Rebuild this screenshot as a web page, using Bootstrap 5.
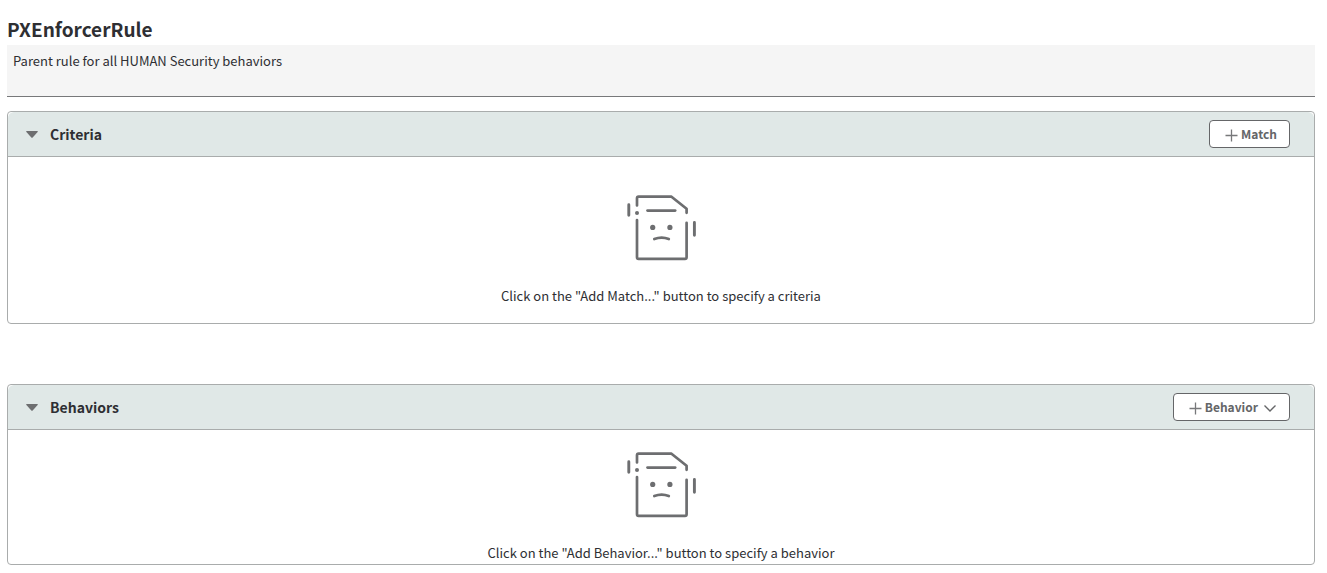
<!DOCTYPE html>
<html lang="en">
<head>
<meta charset="utf-8">
<meta name="viewport" content="width=device-width, initial-scale=1">
<title>PXEnforcerRule</title>
<link href="https://cdn.jsdelivr.net/npm/bootstrap@5.3.0/dist/css/bootstrap.min.css" rel="stylesheet">
<style>
  body { font-family: "Source Sans Pro", "Noto Sans CJK SC", sans-serif; font-size: 13px; line-height: 20px; color: #2e2f33; background: #fff; }
  .rule-page { padding: 14px 12px 8px 7px; }
  .rule-title { font-size: 19px; line-height: 29px; margin-bottom: 2px; font-weight: 700; }
  .rule-note { height: 52px; padding: 6px; resize: none; font-size: 13px; line-height: 20px; color: #2e2f33; background: #f5f5f5; border: 0; border-bottom: 1px solid #77787a; }
  .panels { gap: 60px; margin-top: 14px; }
  .panel { border: 1px solid #a9acac; --bs-card-border-radius: 4px; --bs-card-inner-border-radius: 3px; }
  .panel-head { min-height: 45px; padding: 0 24px 0 18px; background: #e0e8e7; border-bottom: 1px solid #a9acac; }
  .panel-toggle { gap: 12px; font-size: 14px; line-height: 22px; font-weight: 700; color: #2e2f33; }
  .btn-add { gap: 3px; height: 28px; padding: 0 12px 0 15px; font-size: 12px; line-height: 20px; font-weight: 700; color: #656668; background: #fff; border: 1px solid #656668; border-radius: 4px; }
  .empty-state { padding: 22px 16px 1px; }
  .empty-state.roomy { padding: 38px 16px 17px; }
  .empty-art { margin-bottom: 25px; }
</style>
</head>
<body>
<svg class="d-none" aria-hidden="true">
  <symbol id="sad-page" viewBox="0 0 70 66">
    <g fill="none" stroke="#6d6e70" stroke-width="2.7" stroke-linecap="round" stroke-linejoin="round">
      <path d="M10 10.500V3.300Q10 1.700 11.600 1.700H44.500L59.600 13.800V17.800M10 25V62.300Q10 63.900 11.600 63.900H58Q59.600 63.900 59.600 62.300V27.800"/>
      <path stroke-width="2.9" d="M1.800 9.800V20.300M67.400 27.500V40.200"/>
      <path d="M20.500 15.600H48.200"/>
      <path d="M27.300 44.100Q34.700 41.200 41.800 44.100"/>
    </g>
    <g fill="#6d6e70"><circle cx="10" cy="18" r="2"/><circle cx="25.700" cy="32.400" r="2.600"/><circle cx="42.900" cy="32.400" r="2.600"/></g>
  </symbol>
  <symbol id="caret" viewBox="0 0 12 7"><path fill="#6d6e70" d="M.8 0H11.200Q12.300 0 11.600 1L6.700 6.500Q6 7.200 5.300 6.500L.4 1Q-.3 0 .8 0Z"/></symbol>
  <symbol id="plus" viewBox="0 0 13 16"><path fill="none" stroke="#77787a" stroke-width="1.300" d="M6.500 3.500V15.500M.5 9.500H12.500"/></symbol>
  <symbol id="chevron" viewBox="0 0 12 10"><path fill="none" stroke="#656668" stroke-width="1.400" d="M.5 3.500L6 9L11.500 3.500"/></symbol>
</svg>

<main class="container-fluid rule-page">
  <h1 class="rule-title" id="rule-name">PXEnforcerRule</h1>
  <textarea class="form-control rounded-0 rule-note" aria-labelledby="rule-name" readonly>Parent rule for all HUMAN Security behaviors</textarea>

  <div class="panels d-flex flex-column">
    <section class="card panel">
      <div class="panel-head rounded-top d-flex align-items-center justify-content-between">
        <button type="button" class="panel-toggle btn p-0 border-0 d-flex align-items-center" data-bs-toggle="collapse" data-bs-target="#criteria-body" aria-expanded="true">
          <svg width="12" height="7" aria-hidden="true"><use href="#caret"/></svg>Criteria
        </button>
        <button type="button" class="btn btn-add d-flex align-items-center">
          <svg width="13" height="16" aria-hidden="true"><use href="#plus"/></svg>Match
        </button>
      </div>
      <div class="collapse show" id="criteria-body">
        <div class="empty-state roomy text-center">
          <svg class="empty-art d-block mx-auto" width="69" height="66" viewBox="0 0 69 66" aria-hidden="true"><use href="#sad-page" width="70" height="66"/></svg>
          <p class="mb-0">Click on the "Add Match..." button to specify a criteria</p>
        </div>
      </div>
    </section>

    <section class="card panel">
      <div class="panel-head rounded-top d-flex align-items-center justify-content-between">
        <button type="button" class="panel-toggle btn p-0 border-0 d-flex align-items-center" data-bs-toggle="collapse" data-bs-target="#behaviors-body" aria-expanded="true">
          <svg width="12" height="7" aria-hidden="true"><use href="#caret"/></svg>Behaviors
        </button>
        <button type="button" class="btn btn-add d-flex align-items-center">
          <svg width="13" height="16" aria-hidden="true"><use href="#plus"/></svg>Behavior
          <svg width="16" height="10" viewBox="-3 0 16 10" aria-hidden="true"><use href="#chevron" width="12" height="10"/></svg>
        </button>
      </div>
      <div class="collapse show" id="behaviors-body">
        <div class="empty-state text-center">
          <svg class="empty-art d-block mx-auto" width="69" height="66" viewBox="0 0 69 66" aria-hidden="true"><use href="#sad-page" width="70" height="66"/></svg>
          <p class="mb-0">Click on the "Add Behavior..." button to specify a behavior</p>
        </div>
      </div>
    </section>
  </div>
</main>
<script src="https://cdn.jsdelivr.net/npm/bootstrap@5.3.0/dist/js/bootstrap.bundle.min.js"></script>
</body>
</html>
